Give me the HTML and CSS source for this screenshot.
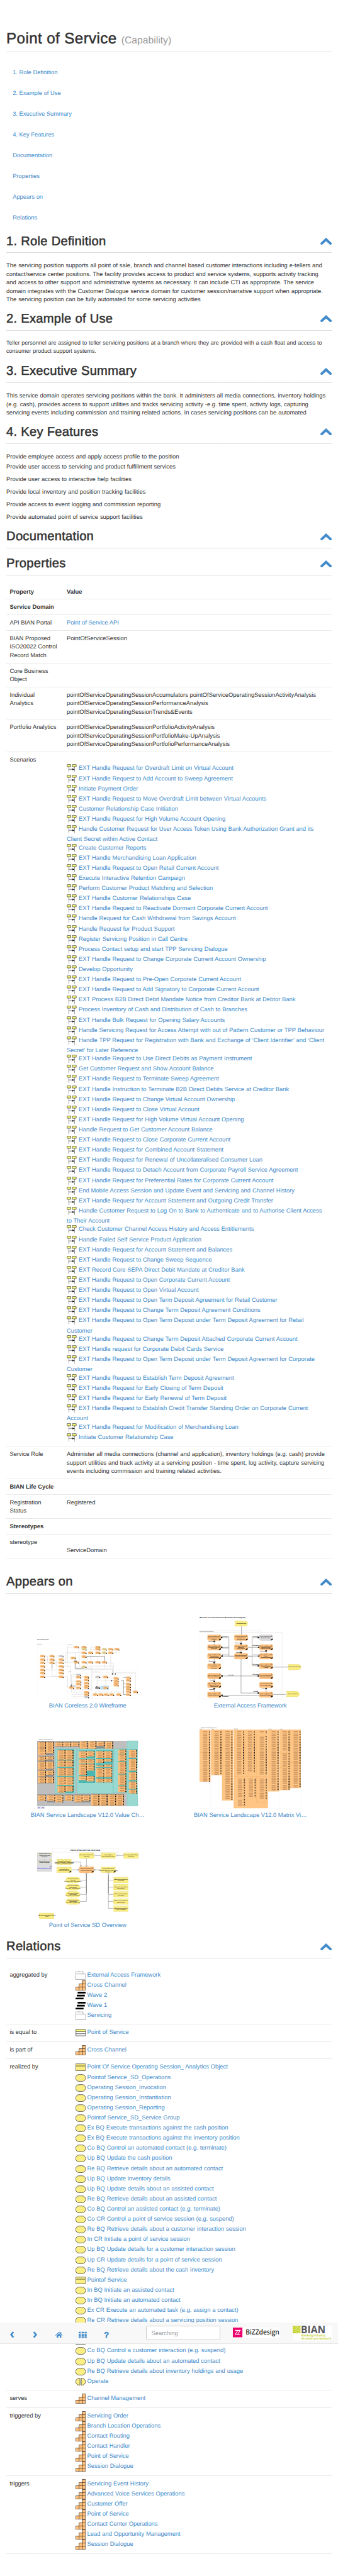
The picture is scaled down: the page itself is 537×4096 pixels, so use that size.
FILE: index.html
```html
<!DOCTYPE html>
<html lang="en">
<head>
<meta charset="utf-8">
<title>Point of Service</title>
<link rel="stylesheet" href="styles.css">
</head>
<body>
<svg class="defs" aria-hidden="true">
  <symbol id="up" viewBox="0 0 27 17"><path d="M3.200 13.600 13.500 4 23.800 13.600" fill="none" stroke="#428bca" stroke-width="6" stroke-linecap="round"/></symbol>
  <symbol id="seq" viewBox="0 0 24 24"><path d="M5 8V20.500M18.500 8V20.500" stroke="#333" stroke-dasharray="3 .8"/><path d="M5 13.700H14" stroke="#333"/><path d="M13.500 11.500 18.300 13.700 13.500 16Z" fill="#000"/><path d="M1 2.500H9.700V7.500H1ZM13.200 2.500H22.500V7.500H13.200Z" fill="#ffff7d" stroke="#222"/></symbol>
  <symbol id="grp" viewBox="0 0 24 24"><path d="M.5 21.500V3H17.800V8.500M.5 8.500H23.500V21.500H.5" fill="none" stroke="#555" stroke-dasharray="2 1"/></symbol>
  <symbol id="cap" viewBox="0 0 24 24"><path d="M.5 23.500V15.700H8.300V8.300H15.700V.8H23.500V23.500ZM8.300 15.700V23.500M15.700 8.300V23.500M8.300 15.700H23.500M15.700 8.300H23.500" fill="#ffc17e" stroke="#1e1308"/></symbol>
  <symbol id="wave" viewBox="0 0 24 24"><path d="M5 3H24V7H5ZM3 10H22V14H3ZM0 17H19V21H0Z"/></symbol>
  <symbol id="tbl" viewBox="0 0 24 24"><path d="M1 4.500H23.500V19.500H1Z" fill="#fff"/><path d="M1 4.500H23.500V9.500H1Z" fill="#ffff7d"/><path d="M1 4.500H23.500V19.500H1ZM1 9.500H23.500M1 14.500H23.500" fill="none" stroke="#111"/></symbol>
  <symbol id="obj" viewBox="0 0 24 24"><path d="M.5 4H23.500V20H.5Z" fill="#fbee83" stroke="#222"/><path d="M1 9H23" stroke="#85804d" stroke-width="2"/></symbol>
  <symbol id="svc" viewBox="0 0 24 24"><rect x=".5" y="4" width="23" height="16" rx="7.500" fill="#fbee83" stroke="#222"/></symbol>
  <symbol id="fn" viewBox="0 0 24 24"><path d="M10.500 4H8.500A8 8 0 0 0 8.500 20H10.500ZM13.500 4H15.500A8 8 0 0 1 15.500 20H13.500Z" fill="#fbee83" stroke="#222"/></symbol>
  <symbol id="n" viewBox="0 0 38 20" overflow="visible"><rect width="35" height="17" rx="4" /><path d="M8 5H27M10 8.500H25M8 12H24" stroke="#6b4c2c" stroke-width="1.200" stroke-dasharray="4 1" opacity=".75"/><rect x="29" y="11" width="7" height="6" rx="2" fill="#000"/></symbol>
  <symbol id="m" viewBox="0 0 64 40" overflow="visible"><rect width="62" height="35" rx="7"/><path d="M56 3 60 9H54Z" fill="#8d6a45"/><path d="M53 33 55 28 61 25 60 31Z" fill="#000" stroke="#000" stroke-width="2"/></symbol>
  <symbol id="ev" viewBox="0 0 64 34" overflow="visible"><path d="M1 1H48Q61 2 61 17Q61 32 48 33H1Q10 17 1 1Z" fill="#fbee83" stroke="#e6d658" stroke-width="2"/></symbol>
  <symbol id="y" viewBox="0 0 68 38" overflow="visible"><path d="M1 1H67V37H1Z" fill="#fbee83" stroke="#eadc66" stroke-width="2.500"/><path d="M3 7H65" stroke="#f5efb0" stroke-width="2"/></symbol>
</svg>
<div class="page">
<h1>Point of Service <small>(Capability)</small></h1>
<ul class="toc">
<li><a>1. Role Definition</a></li><li><a>2. Example of Use</a></li><li><a>3. Executive Summary</a></li><li><a>4. Key Features</a></li><li><a>Documentation</a></li><li><a>Properties</a></li><li><a>Appears on</a></li><li><a>Relations</a></li>
</ul>

<h2>1. Role Definition<svg class="up"><use href="#up"/></svg></h2>
<p>The servicing position supports all point of sale, branch and channel based customer interactions including e-tellers and<br>contact/service center positions. The facility provides access to product and service systems, supports activity tracking<br>and access to other support and administrative systems as necessary. It can include CTI as appropriate. The service<br>domain integrates with the Customer Dialogue service domain for customer session/narrative support when appropriate.<br>The servicing position can be fully automated for some servicing activities</p>

<h2>2. Example of Use<svg class="up"><use href="#up"/></svg></h2>
<p class="small">Teller personnel are assigned to teller servicing positions at a branch where they are provided with a cash float and access to<br>consumer product support systems.</p>

<h2>3. Executive Summary<svg class="up"><use href="#up"/></svg></h2>
<p>This service domain operates servicing positions within the bank. It administers all media connections, inventory holdings<br>(e.g. cash), provides access to support utilities and tracks servicing activity -e.g. time spent, activity logs, capturing<br>servicing events including commission and training related actions. In cases servicing positions can be automated</p>

<h2>4. Key Features<svg class="up"><use href="#up"/></svg></h2>
<div class="features">
<div class="tight">Provide employee access and apply access profile to the position</div>
<div>Provide user access to servicing and product fulfillment services</div>
<div>Provide user access to interactive help facilities</div>
<div>Provide local inventory and position tracking facilities</div>
<div>Provide access to event logging and commission reporting</div>
<div>Provide automated point of service support facilities</div>
</div>

<h2>Documentation<svg class="up"><use href="#up"/></svg></h2>

<h2>Properties<svg class="up"><use href="#up"/></svg></h2>
<div class="table props">
<div class="row head"><div>Property</div><div>Value</div></div>
<div class="row head"><div class="wide">Service Domain</div></div>
<div class="row"><div>API BIAN Portal</div><div><a>Point of Service API</a></div></div>
<div class="row"><div>BIAN Proposed<br>ISO20022 Control<br>Record Match</div><div>PointOfServiceSession</div></div>
<div class="row"><div>Core Business<br>Object</div><div></div></div>
<div class="row"><div>Individual<br>Analytics</div><div>pointOfServiceOperatingSessionAccumulators pointOfServiceOperatingSessionActivityAnalysis<br>pointOfServiceOperatingSessionPerformanceAnalysis<br>pointOfServiceOperatingSessionTrends&amp;Events</div></div>
<div class="row"><div>Portfolio Analytics</div><div>pointOfServiceOperatingSessionPortfolioActivityAnalysis<br>pointOfServiceOperatingSessionPortfolioMake-UpAnalysis<br>pointOfServiceOperatingSessionPortfolioPerformanceAnalysis</div></div>
<div class="row"><div>Scenarios</div><ul class="scenarios">
<li><svg><use href="#seq"/></svg> <a>EXT Handle Request for Overdraft Limit on Virtual Account</a></li>
<li><svg><use href="#seq"/></svg> <a>EXT Handle Request to Add Account to Sweep Agreement</a></li>
<li><svg><use href="#seq"/></svg> <a>Initiate Payment Order</a></li>
<li><svg><use href="#seq"/></svg> <a>EXT Handle Request to Move Overdraft Limit between Virtual Accounts</a></li>
<li><svg><use href="#seq"/></svg> <a>Customer Relationship Case Initiation</a></li>
<li><svg><use href="#seq"/></svg> <a>EXT Handle Request for High Volume Account Opening</a></li>
<li><svg><use href="#seq"/></svg> <a>Handle Customer Request for User Access Token Using Bank Authorization Grant and its<br>Client Secret within Active Contact</a></li>
<li><svg><use href="#seq"/></svg> <a>Create Customer Reports</a></li>
<li><svg><use href="#seq"/></svg> <a>EXT Handle Merchandising Loan Application</a></li>
<li><svg><use href="#seq"/></svg> <a>EXT Handle Request to Open Retail Current Account</a></li>
<li><svg><use href="#seq"/></svg> <a>Execute Interactive Retention Campaign</a></li>
<li><svg><use href="#seq"/></svg> <a>Perform Customer Product Matching and Selection</a></li>
<li><svg><use href="#seq"/></svg> <a>EXT Handle Customer Relationships Case</a></li>
<li><svg><use href="#seq"/></svg> <a>EXT Handle Request to Reactivate Dormant Corporate Current Account</a></li>
<li><svg><use href="#seq"/></svg> <a>Handle Request for Cash Withdrawal from Savings Account</a></li>
<li><svg><use href="#seq"/></svg> <a>Handle Request for Product Support</a></li>
<li><svg><use href="#seq"/></svg> <a>Register Servicing Position in Call Centre</a></li>
<li><svg><use href="#seq"/></svg> <a>Process Contact setup and start TPP Servicing Dialogue</a></li>
<li><svg><use href="#seq"/></svg> <a>EXT Handle Request to Change Corporate Current Account Ownership</a></li>
<li><svg><use href="#seq"/></svg> <a>Develop Opportunity</a></li>
<li><svg><use href="#seq"/></svg> <a>EXT Handle Request to Pre-Open Corporate Current Account</a></li>
<li><svg><use href="#seq"/></svg> <a>EXT Handle Request to Add Signatory to Corporate Current Account</a></li>
<li><svg><use href="#seq"/></svg> <a>EXT Process B2B Direct Debit Mandate Notice from Creditor Bank at Debtor Bank</a></li>
<li><svg><use href="#seq"/></svg> <a>Process Inventory of Cash and Distribution of Cash to Branches</a></li>
<li><svg><use href="#seq"/></svg> <a>EXT Handle Bulk Request for Opening Salary Accounts</a></li>
<li><svg><use href="#seq"/></svg> <a>Handle Servicing Request for Access Attempt with out of Pattern Customer or TPP Behaviour</a></li>
<li><svg><use href="#seq"/></svg> <a>Handle TPP Request for Registration with Bank and Exchange of ‘Client Identifier’ and ‘Client<br>Secret’ for Later Reference</a></li>
<li><svg><use href="#seq"/></svg> <a>EXT Handle Request to Use Direct Debits as Payment Instrument</a></li>
<li><svg><use href="#seq"/></svg> <a>Get Customer Request and Show Account Balance</a></li>
<li><svg><use href="#seq"/></svg> <a>EXT Handle Request to Terminate Sweep Agreement</a></li>
<li><svg><use href="#seq"/></svg> <a>EXT Handle Instruction to Terminate B2B Direct Debits Service at Creditor Bank</a></li>
<li><svg><use href="#seq"/></svg> <a>EXT Handle Request to Change Virtual Account Ownership</a></li>
<li><svg><use href="#seq"/></svg> <a>EXT Handle Request to Close Virtual Account</a></li>
<li><svg><use href="#seq"/></svg> <a>EXT Handle Request for High Volume Virtual Account Opening</a></li>
<li><svg><use href="#seq"/></svg> <a>Handle Request to Get Customer Account Balance</a></li>
<li><svg><use href="#seq"/></svg> <a>EXT Handle Request to Close Corporate Current Account</a></li>
<li><svg><use href="#seq"/></svg> <a>EXT Handle Request for Combined Account Statement</a></li>
<li><svg><use href="#seq"/></svg> <a>EXT Handle Request for Renewal of Uncollateralised Consumer Loan</a></li>
<li><svg><use href="#seq"/></svg> <a>EXT Handle Request to Detach Account from Corporate Payroll Service Agreement</a></li>
<li><svg><use href="#seq"/></svg> <a>EXT Handle Request for Preferential Rates for Corporate Current Account</a></li>
<li><svg><use href="#seq"/></svg> <a>End Mobile Access Session and Update Event and Servicing and Channel History</a></li>
<li><svg><use href="#seq"/></svg> <a>EXT Handle Request for Account Statement and Outgoing Credit Transfer</a></li>
<li><svg><use href="#seq"/></svg> <a>Handle Customer Request to Log On to Bank to Authenticate and to Authorise Client Access<br>to Their Account</a></li>
<li><svg><use href="#seq"/></svg> <a>Check Customer Channel Access History and Access Entitlements</a></li>
<li><svg><use href="#seq"/></svg> <a>Handle Failed Self Service Product Application</a></li>
<li><svg><use href="#seq"/></svg> <a>EXT Handle Request for Account Statement and Balances</a></li>
<li><svg><use href="#seq"/></svg> <a>EXT Handle Request to Change Sweep Sequence</a></li>
<li><svg><use href="#seq"/></svg> <a>EXT Record Core SEPA Direct Debit Mandate at Creditor Bank</a></li>
<li><svg><use href="#seq"/></svg> <a>EXT Handle Request to Open Corporate Current Account</a></li>
<li><svg><use href="#seq"/></svg> <a>EXT Handle Request to Open Virtual Account</a></li>
<li><svg><use href="#seq"/></svg> <a>EXT Handle Request to Open Term Deposit Agreement for Retail Customer</a></li>
<li><svg><use href="#seq"/></svg> <a>EXT Handle Request to Change Term Deposit Agreement Conditions</a></li>
<li><svg><use href="#seq"/></svg> <a>EXT Handle Request to Open Term Deposit under Term Deposit Agreement for Retail<br>Customer</a></li>
<li><svg><use href="#seq"/></svg> <a>EXT Handle Request to Change Term Deposit Attached Corporate Current Account</a></li>
<li><svg><use href="#seq"/></svg> <a>EXT Handle request for Corporate Debit Cards Service</a></li>
<li><svg><use href="#seq"/></svg> <a>EXT Handle Request to Open Term Deposit under Term Deposit Agreement for Corporate<br>Customer</a></li>
<li><svg><use href="#seq"/></svg> <a>EXT Handle Request to Establish Term Deposit Agreement</a></li>
<li><svg><use href="#seq"/></svg> <a>EXT Handle Request for Early Closing of Term Deposit</a></li>
<li><svg><use href="#seq"/></svg> <a>EXT Handle Request for Early Renewal of Term Deposit</a></li>
<li><svg><use href="#seq"/></svg> <a>EXT Handle Request to Establish Credit Transfer Standing Order on Corporate Current<br>Account</a></li>
<li><svg><use href="#seq"/></svg> <a>EXT Handle Request for Modification of Merchandising Loan</a></li>
<li><svg><use href="#seq"/></svg> <a>Initiate Customer Relationship Case</a></li>
</ul></div>
<div class="row"><div>Service Role</div><div class="role">Administer all media connections (channel and application), inventory holdings (e.g. cash) provide<br>support utilities and track activity at a servicing position - time spent, log activity, capture servicing<br>events including commission and training related activities.</div></div>
<div class="row head"><div class="wide">BIAN Life Cycle</div></div>
<div class="row"><div>Registration<br>Status</div><div>Registered</div></div>
<div class="row head"><div class="wide">Stereotypes</div></div>
<div class="row"><div>stereotype</div><div><br>ServiceDomain</div></div>
</div>

<h2>Appears on<svg class="up"><use href="#up"/></svg></h2>
<div class="views">
<figure><div class="shot"><svg viewBox="24 30 720 438" width="240" height="146">
  <g fill="none" stroke="#eee" stroke-width="1.500"><path d="M24 79H236V466H24ZM242 82H743V260H242ZM242 273H408V463H242ZM416 277H743V463H416ZM554 296H620V394H554Z"/></g>
  <text x="24" y="42" font-size="6" font-weight="700" textLength="83">BIAN Coreless Wireframe Diagram</text>
  <path d="M24 76.500H60M243 79.500H275M244 272H267M417 274H473" stroke="#999" stroke-width="2"/>
  <g fill="none" stroke="#c4c4c4" stroke-width="1.800"><path d="M80 160H98V208H112M80 186H98M148 208H176M130 170V304H176M148 186H158V232H176M158 160H176M80 307H176M80 259H176M212 205H284M212 307H240V382H250M238 205V97H284M320 97H339M226 210V137H339M322 112V137M212 232H260V376M404 130V97H437M404 113H437M357 137V245M372 165H455V196M380 165V232H562V288M404 145V196M503 110V250M547 138V250H298V205M372 204H520V210H566V288M292 210V257H558V288M590 120V136H565M298 137V200M323 150V236H339M298 245H412V400H268M268 376V293H300M268 309H300M268 340H300M268 360H300M268 384H356M337 309H356M340 372V331H356M340 352H356M268 395V418H356M268 434H356M268 450H356M450 316V378M456 330V334H554M470 309H493M511 318V378M470 385H493M438 426V415H637M475 415V426M514 415V426M553 415V426M602 415V426M690 415H704M580 288V281H722V408"/></g>
  <g fill="none" stroke="#555" stroke-width="2.500"><path d="M372 163H503V196M298 212V250H355M620 334H638V434H654M638 313H654M638 358H654M638 380H654M268 360V374H300M130 215V250"/></g>
  <rect x="474" y="372" width="60" height="27" fill="#b5dffa"/>
  <g fill="#ffc17e">
  <g id="c7"><use href="#n" x="44" y="177" width="38" height="20"/><use href="#n" x="44" y="200" width="38" height="20"/><use href="#n" x="44" y="251" width="38" height="20"/><use href="#n" x="44" y="273" width="38" height="20"/><use href="#n" x="44" y="299" width="38" height="20"/><use href="#n" x="44" y="225" width="38" height="20"/></g>
  <use href="#c7" x="132"/><use href="#n" x="44" y="153" width="38" height="20"/><use href="#n" x="111" y="153" width="38" height="20"/><use href="#n" x="111" y="177" width="38" height="20"/><use href="#n" x="111" y="200" width="38" height="20"/>
  <use href="#n" x="284" y="88" width="38" height="20"/><use href="#n" x="339" y="88" width="38" height="20"/><use href="#n" x="339" y="129" width="38" height="20"/><use href="#n" x="437" y="88" width="38" height="20"/><use href="#n" x="437" y="104" width="38" height="20"/><use href="#n" x="529" y="104" width="38" height="20"/><use href="#n" x="572" y="104" width="38" height="20"/><use href="#n" x="386" y="129" width="38" height="20"/><use href="#n" x="437" y="129" width="38" height="20"/><use href="#n" x="529" y="129" width="38" height="20"/><use href="#n" x="339" y="156" width="38" height="20"/><use href="#n" x="262" y="166" width="38" height="20"/><use href="#n" x="284" y="196" width="38" height="20"/><use href="#n" x="339" y="196" width="38" height="20"/><use href="#n" x="386" y="196" width="38" height="20"/><use href="#n" x="437" y="196" width="38" height="20"/><use href="#n" x="483" y="196" width="38" height="20"/>
  <use href="#n" x="300" y="302" width="38" height="20"/><use href="#n" x="300" y="333" width="38" height="20"/><use href="#n" x="300" y="352" width="38" height="20"/><use href="#n" x="300" y="377" width="38" height="20"/><use href="#n" x="250" y="376" width="38" height="20"/><use href="#n" x="356" y="302" width="38" height="20"/><use href="#n" x="356" y="323" width="38" height="20"/><use href="#n" x="356" y="345" width="38" height="20"/><use href="#n" x="356" y="363" width="38" height="20"/><use href="#n" x="356" y="376" width="38" height="20"/><use href="#n" x="356" y="410" width="38" height="20"/><use href="#n" x="356" y="427" width="38" height="20"/>
  <use href="#n" x="493" y="300" width="38" height="20"/><use href="#n" x="493" y="378" width="38" height="20"/><use href="#n" x="567" y="311" width="38" height="20"/><use href="#n" x="567" y="328" width="38" height="20"/><use href="#n" x="567" y="345" width="38" height="20"/><use href="#n" x="567" y="359" width="38" height="20"/><use href="#n" x="654" y="306" width="38" height="20"/><use href="#n" x="654" y="325" width="38" height="20"/><use href="#n" x="654" y="351" width="38" height="20"/><use href="#n" x="654" y="371" width="38" height="20"/><use href="#n" x="654" y="387" width="38" height="20"/><use href="#n" x="654" y="405" width="38" height="20"/><use href="#n" x="654" y="426" width="38" height="20"/><use href="#n" x="704" y="407" width="38" height="20"/><use href="#n" x="420" y="426" width="38" height="20"/><use href="#n" x="459" y="426" width="38" height="20"/><use href="#n" x="496" y="426" width="38" height="20"/><use href="#n" x="535" y="426" width="38" height="20"/><use href="#n" x="585" y="426" width="38" height="20"/>
  </g>
  <g fill="#ddd"><use href="#n" x="176" y="153" width="38" height="20"/><use href="#n" x="300" y="286" width="38" height="20"/><use href="#n" x="356" y="443" width="38" height="20"/><use href="#n" x="436" y="300" width="38" height="20"/></g>
  <g fill="#999"><use href="#n" x="436" y="378" width="38" height="20"/></g>
  <g fill="#ecdc9c"><use href="#n" x="339" y="104" width="38" height="20"/><use href="#n" x="483" y="104" width="38" height="20"/><use href="#n" x="483" y="129" width="38" height="20"/><use href="#n" x="339" y="229" width="38" height="20"/></g>
  <path d="M555 285H564V292H555ZM576 285H582V292H576ZM551 332H557V340H551ZM286 194H305V198H286ZM262 372H268V378H262ZM444 376H450V381H444Z"/>
</svg></div><figcaption><a>BIAN Coreless 2.0 Wireframe</a></figcaption></figure>

<figure><div class="shot"><svg viewBox="928 860 469 513" width="240" height="196" preserveAspectRatio="none">
  <path d="M928 960H1310V1373H928ZM928 950H1214V960" fill="none" stroke="#e4e4e4" stroke-width="2"/>
  <text x="929" y="870" font-size="11" font-weight="700" textLength="212" lengthAdjust="spacingAndGlyphs">External Access Framework Wireframe Area Diagram</text>
  <text x="929" y="956" font-size="7" textLength="64" lengthAdjust="spacingAndGlyphs">External Access Framework</text>
  <g fill="none" stroke="#777" stroke-width="2"><path d="M1122 922V975M1120 1010V1035M1120 1070V1090M1027 992H1064V1107H1089M1027 1052H1064M1027 1107H1089M1151 1052H1205M1151 1107H1205M1151 1107H1171V992H1205M1171 1107V1167H1205M996 1010V1035M996 1125V1153M996 1248V1268M996 1303V1328M1236 1070V1090M1236 1303V1328M1120 1125V1336H1205M1027 1230H1205M1027 1350H1205M1267 1175H1337M1267 1345H1329"/></g>
  <path d="M1027 988V996L1034 992ZM1027 1048 1034 1052 1027 1056ZM1205 1048V1056L1198 1052ZM1205 1103V1111L1198 1107ZM1034 1103V1111L1027 1107ZM1034 1226V1234L1027 1230ZM1198 1226V1234L1205 1230ZM1034 1346V1354L1027 1350ZM1198 1332V1340L1205 1336ZM1198 988V996L1205 992ZM1198 1163V1171L1205 1167ZM992 1016H1000L996 1009ZM992 1147H1000L996 1153ZM992 1262H1000L996 1268ZM992 1309H1000L996 1303ZM1232 1075H1240L1236 1069ZM1232 1309H1240L1236 1303ZM1116 1029H1124L1120 1035ZM1116 1084H1124L1120 1090Z" stroke="#000" stroke-width="2"/>
  <g fill="#ffc17e" stroke="#eba75b" stroke-width="1">
  <use href="#m" x="965" y="975" width="64" height="40"/><use href="#m" x="965" y="1035" width="64" height="40"/><use href="#m" x="965" y="1090" width="64" height="40"/><use href="#m" x="965" y="1153" width="64" height="40"/><use href="#m" x="965" y="1213" width="64" height="40"/><use href="#m" x="965" y="1268" width="64" height="40"/><use href="#m" x="965" y="1328" width="64" height="40"/>
  <use href="#m" x="1089" y="975" width="64" height="40"/><use href="#m" x="1089" y="1035" width="64" height="40"/><use href="#m" x="1089" y="1090" width="64" height="40"/>
  <use href="#m" x="1205" y="1035" width="64" height="40"/><use href="#m" x="1205" y="1090" width="64" height="40"/><use href="#m" x="1205" y="1150" width="64" height="40"/><use href="#m" x="1205" y="1213" width="64" height="40"/><use href="#m" x="1205" y="1268" width="64" height="40"/><use href="#m" x="1205" y="1328" width="64" height="40"/></g>
  <g fill="#ddd" stroke="#bbb"><use href="#m" x="1205" y="975" width="64" height="40"/></g>
  <use href="#ev" x="1089" y="888" width="64" height="34"/><use href="#ev" x="1336" y="1158" width="64" height="34"/><use href="#ev" x="1328" y="1325" width="64" height="34"/>
  <g class="tiny"><text x="995" y="988">«ServiceDomain»<tspan x="995" dy="8">Channel Activity</tspan><tspan x="995" dy="8">History</tspan></text><text x="995" y="1048">«ServiceDomain»<tspan x="995" dy="8">Channel Activity</tspan><tspan x="995" dy="8">Analysis</tspan></text><text x="995" y="1103">«ServiceDomain»<tspan x="995" dy="8">Transaction</tspan><tspan x="995" dy="8">Authorization</tspan></text><text x="995" y="1166">«ServiceDomain»<tspan x="995" dy="8">Customer</tspan><tspan x="995" dy="8">Access</tspan></text><text x="995" y="1229">«ServiceDomain»<tspan x="995" dy="8">Contact Routing</tspan></text><text x="995" y="1281">«ServiceDomain»<tspan x="995" dy="8">Contact Center</tspan><tspan x="995" dy="8">Operations</tspan></text><text x="995" y="1343">«ServiceDomain»<tspan x="995" dy="8">Point of Service</tspan></text>
  <text x="1119" y="988">«ServiceDomain»<tspan x="1119" dy="8">Customer</tspan><tspan x="1119" dy="8">Workbench</tspan></text><text x="1119" y="1048">«ServiceDomain»<tspan x="1119" dy="8">eBranch</tspan><tspan x="1119" dy="8">Operations</tspan></text><text x="1119" y="1105">«ServiceDomain»<tspan x="1119" dy="8">Contact Handler</tspan></text>
  <text x="1235" y="990">Party Reference<tspan x="1235" dy="8">Data Directory</tspan></text><text x="1235" y="1048">«ServiceDomain»<tspan x="1235" dy="8">Issued Device</tspan><tspan x="1235" dy="8">Administration</tspan></text><text x="1235" y="1103">«ServiceDomain»<tspan x="1235" dy="8">Party</tspan><tspan x="1235" dy="8">Authentication</tspan></text><text x="1235" y="1163">«ServiceDomain»<tspan x="1235" dy="8">Party Routing</tspan><tspan x="1235" dy="8">Profile</tspan></text><text x="1235" y="1229">«ServiceDomain»<tspan x="1235" dy="8">Session History</tspan></text><text x="1235" y="1283">«ServiceDomain»<tspan x="1235" dy="8">Servicing Order</tspan></text><text x="1235" y="1343">«ServiceDomain»<tspan x="1235" dy="8">Session Dialogue</tspan></text>
  <text x="1121" y="907">Access Event</text><text x="1366" y="1176">Information Event</text><text x="1359" y="1343">Service Event</text><text x="1046" y="988">Executes</text><text x="1046" y="1060">Retrieves</text><text x="1047" y="1103">Executes</text><text x="986" y="1021">Retrieves</text><text x="986" y="1141">Retrieves</text><text x="1109" y="1027">Executes</text><text x="1108" y="1085">Initiate</text><text x="1189" y="988">Retrieves</text><text x="1189" y="1045">Retrieves</text><text x="1192" y="1103">Executes</text><text x="1224" y="1082">Retrieves</text><text x="1189" y="1160">Retrieves</text><text x="1073" y="1226">Provide</text><text x="1189" y="1223">Retrieves</text><text x="985" y="1259">Notify</text><text x="984" y="1317">Update</text><text x="1188" y="1327">Initiate</text><text x="1226" y="1314">Initiate</text><text x="1047" y="1359">Respond</text></g>
</svg></div><figcaption><a>External Access Framework</a></figcaption></figure>

<figure><div class="shot"><svg viewBox="172 65 471 467" width="240" height="164" preserveAspectRatio="none">
  <text x="180" y="69" font-size="6" font-weight="700" textLength="64" lengthAdjust="spacingAndGlyphs">BIAN Service Landscape V12.0</text>
  <path d="M172 73H589V515H172Z" fill="#bebebe"/><path d="M174 77H250V172H174ZM174 176H250V210H174ZM174 211H250V270H174ZM174 272H250V315H174ZM174 317H250V361H174ZM255 80H368V116H255ZM369 77H526V127H369ZM174 435H214V481H174ZM218 435H295V489H218ZM300 435H340V481H300ZM344 435H419V489H344ZM423 433H575V512H423Z" fill="#8f8f8f"/>
  <path d="M254 128H354L350 428H254L260 280ZM357 128H527L523 250 527 428H357ZM529 128H589V425H524ZM590 74H640L636 290 640 513H590Z" fill="#99d9d1" stroke="#74c6be" stroke-width="2"/>
  <path d="M266 131H343V426H266ZM365 138H441V190H365ZM365 194H441V228H365ZM365 231H441V358H365ZM446 138H523V228H446ZM446 231H521V356H446ZM549 131H587V422H549ZM598 131H637V429H598Z" fill="#4bb7b3"/>
  <path id="vc" d="M194 82V121M194 124V171M232 82V157M194 180V207M232 180V200M194 215V268M232 215V262M194 275V313M232 275V303M194 320V359M232 320V359M274 84V112M311 84V112M349 84V112M388 78V126M428 78V126M467 80V108M506 80V126M285 137V201M322 137V201M285 206V250M322 206V250M285 256V310M322 256V310M285 317V371M322 317V371M285 379V424M322 379V415M384 143V188M420 143V180M384 199V227M420 199V227M384 232V305M420 232V275M384 312V339M420 312V347M464 143V188M502 143V188M464 196V222M502 196V214M464 240V252M502 234V252M464 258V320M502 258V320M464 328V355M502 328V355M567 133V161M567 165V209M567 215V296M567 302V374M567 380V421M617 135V187M617 196V275M617 286V339M617 348V397M617 403V429M194 440V478M237 440V478M274 440V488M320 440V478M364 440V486M400 440V478M442 436V510M480 436V510M520 436V510M556 436V510"/>
  <use href="#vc" class="rows"/><use href="#vc" class="dots" x="16.500"/>
  <path d="M172 517H208V531H172Z" fill="#dcdcf5"/><path d="M177 520H185V529H177ZM195 520H204V528H195Z" fill="#9a9ab5"/>
</svg></div><figcaption><a>BIAN Service Landscape V12.0 Value Ch…</a></figcaption></figure>

<figure><div class="shot"><svg viewBox="927 -22 470 552" width="240" height="193" preserveAspectRatio="none">
  <text x="934" y="-16" font-size="6" font-weight="700" textLength="72" lengthAdjust="spacingAndGlyphs">BIAN Service Landscape Matrix V12.0</text>
  <path d="M927 -8H979V525H927ZM980 -8H1083V525H980ZM1245 -8H1296V525H1245ZM1297 -8H1396V525H1297Z" fill="none" stroke="#eee"/>
  <path d="M928 -12H940M982 -12H994M1086 -13H1106M1246 -12H1262M1298 -12H1312" stroke="#888" stroke-width="2"/>
  <path d="M927 -8H978V344H927ZM980 -8H1031V301H980ZM1031 -8H1082V472H1031ZM1085 -8H1244V525H1085ZM1245 -8H1295V410H1245ZM1297 -8H1347V402H1297ZM1347 -8H1397V388H1347Z" fill="#ffc584"/>
  <path d="M1031 -8V301M1347 -8V388M927 146H978M927 264H978M980 175H1031M1031 237H1082M1031 369H1082M1085 310H1244M1137 20V295M1190 20V295M1245 210H1295M1297 150H1347M1297 248H1347M1347 215H1397M1192 310V484H1240V310" fill="none" stroke="#efb06b" stroke-width="2"/>
  <path id="mx" d="M953 0V345M1006 0V296M1057 0V467M1111 0V295M1161 0V282M1216 0V18M1216 36V295M1271 0V405M1322 0V138M1322 150V246M1322 252V398M1373 0V385M1115 325V450M1115 462V510M1165 325V448M1216 325V462"/>
  <use href="#mx" class="rows"/><use href="#mx" class="dots" x="20"/>
</svg></div><figcaption><a>BIAN Service Landscape V12.0 Matrix Vi…</a></figcaption></figure>

<figure><div class="shot"><svg viewBox="172 795 471 477" width="240" height="167" preserveAspectRatio="none">
  <path d="M242 796H550V822H242Z" fill="none" stroke="#ddd"/>
  <text x="327" y="810" font-size="13" font-weight="700" textLength="138" lengthAdjust="spacingAndGlyphs">Point of Service SD Overview</text>
  <path d="M172 825H240V863H172ZM172 868H240V906H172ZM172 911H240V950H172Z" fill="#ddd" stroke="#c9c9c9" stroke-width="2"/>
  <path d="M231 828H238V836H231ZM231 871H238V879H231Z" fill="#d8d44a"/><path d="M232 913H239V919H232Z" fill="#888"/>
  <g fill="none" stroke="#888" stroke-width="2"><path d="M435 843H468M540 843H574M401 862V918M331 888H375V918M331 940H367M437 940H468M371 1010H401M371 1058H401M371 1107H401M371 1154H401V960M503 960V1201H527M503 1010H527M503 1058H527M503 1107H527M503 1154H527"/></g>
  <path d="M503 975V1100M401 960V1100" stroke="#444" stroke-width="2"/>
  <path d="M371 910H379L375 919ZM397 910H405L401 919ZM397 967H405L401 958ZM500 967H507L503 958ZM362 936V946L367 941ZM441 936V946L436 941ZM538 843 542 838 546 843 542 848Z" fill="#fff" stroke="#666" stroke-width="1.500"/>
  <use href="#y" x="468" y="825" width="68" height="38"/><use href="#y" x="574" y="825" width="68" height="38"/><use href="#y" x="263" y="868" width="68" height="38"/><use href="#y" x="263" y="920" width="68" height="40"/><use href="#y" x="468" y="920" width="68" height="40"/><use href="#y" x="527" y="990" width="68" height="38"/><use href="#y" x="527" y="1039" width="68" height="38"/><use href="#y" x="527" y="1087" width="68" height="38"/><use href="#y" x="527" y="1136" width="68" height="38"/><use href="#y" x="527" y="1184" width="68" height="38"/><use href="#y" x="182" y="1233" width="68" height="38"/>
  <g fill="#fbee83" stroke="#eadc66" stroke-width="2"><rect x="368" y="825" width="67" height="38" rx="7"/><rect x="305" y="990" width="66" height="38" rx="17"/><rect x="305" y="1039" width="66" height="38" rx="17"/><rect x="305" y="1087" width="66" height="38" rx="17"/><rect x="305" y="1136" width="66" height="38" rx="17"/></g>
  <rect x="368" y="920" width="67" height="40" rx="6" fill="#ffc17e" stroke="#eba75b" stroke-width="2"/>
  <path d="M426 957 428 951 434 948 432 955ZM322 957 324 951 330 948 328 955ZM528 957 530 951 536 948 534 955Z" stroke="#000" stroke-width="2"/>
  <path d="M427 923 433 931H427ZM429 828H432V832H429Z" fill="#777"/>
  <g class="tiny"><text x="206" y="835">Point of Service<tspan x="206" dy="10">Control Record</tspan><tspan x="206" dy="10">Diagram</tspan></text><text x="206" y="883">Point of Service<tspan x="206" dy="10">BOM Diagram</tspan></text><text x="206" y="932" class="lnk">Point of Service API</text>
  <text x="401" y="841">«FunctionalPattern»<tspan x="401" dy="9">Operate</tspan></text><text x="502" y="843">«AssetType»<tspan x="502" dy="9">Operating Session</tspan></text><text x="608" y="843">«GenericArtifactType»<tspan x="608" dy="9">Function</tspan></text>
  <text x="297" y="883">«AnalyticsObject»<tspan x="297" dy="9">Point Of Service Operating</tspan><tspan x="297" dy="8">Session_ Analytics Object</tspan></text><text x="297" y="940">«AssetType»<tspan x="297" dy="9">Point of Service</tspan></text><text x="401" y="937">«ServiceDomain»<tspan x="401" dy="10">Point of Service</tspan></text><text x="502" y="935">«ControlRecord»<tspan x="502" dy="12">Point of Service Operating</tspan><tspan x="502" dy="8">Session</tspan></text>
  <text x="338" y="1003">«ServiceGroup»<tspan x="338" dy="9">Pointof</tspan><tspan x="338" dy="8">Service_SD_Operations</tspan></text><text x="338" y="1052">«ServiceGroup»<tspan x="338" dy="9">Operating</tspan><tspan x="338" dy="8">Session_Instantiation</tspan></text><text x="338" y="1100">«ServiceGroup»<tspan x="338" dy="9">Operating</tspan><tspan x="338" dy="8">Session_Invocation</tspan></text><text x="338" y="1149">«ServiceGroup»<tspan x="338" dy="9">Operating</tspan><tspan x="338" dy="8">Session_Reporting</tspan></text>
  <text x="561" y="1008">«BehaviorQualifier»<tspan x="561" dy="10">Assisted</tspan></text><text x="561" y="1057">«BehaviorQualifier»<tspan x="561" dy="10">Interaction</tspan></text><text x="561" y="1105">«BehaviorQualifier»<tspan x="561" dy="10">Inventory</tspan></text><text x="561" y="1154">«BehaviorQualifier»<tspan x="561" dy="10">Automated</tspan></text><text x="561" y="1202">«BehaviorQualifier»<tspan x="561" dy="10">Cash Position</tspan></text><text x="217" y="1251">«BehaviorQualifierType»<tspan x="217" dy="8">Task</tspan></text></g>
</svg></div><figcaption><a>Point of Service SD Overview</a></figcaption></figure>
</div>

<h2>Relations<svg class="up"><use href="#up"/></svg></h2>
<div class="table rels">
<div class="row"><div>aggregated by</div><ul>
<li><svg><use href="#grp"/></svg><a>External Access Framework</a></li>
<li><svg><use href="#cap"/></svg><a>Cross Channel</a></li>
<li><svg><use href="#wave"/></svg><a>Wave 2</a></li>
<li><svg><use href="#wave"/></svg><a>Wave 1</a></li>
<li><svg><use href="#grp"/></svg><a>Servicing</a></li>
</ul></div>
<div class="row"><div>is equal to</div><ul><li><svg><use href="#tbl"/></svg><a>Point of Service</a></li></ul></div>
<div class="row"><div>is part of</div><ul><li><svg><use href="#cap"/></svg><a>Cross Channel</a></li></ul></div>
<div class="row"><div>realized by</div><ul>
<li><svg><use href="#obj"/></svg><a>Point Of Service Operating Session_ Analytics Object</a></li>
<li><svg><use href="#svc"/></svg><a>Pointof Service_SD_Operations</a></li>
<li><svg><use href="#svc"/></svg><a>Operating Session_Invocation</a></li>
<li><svg><use href="#svc"/></svg><a>Operating Session_Instantiation</a></li>
<li><svg><use href="#svc"/></svg><a>Operating Session_Reporting</a></li>
<li><svg><use href="#svc"/></svg><a>Pointof Service_SD_Service Group</a></li>
<li><svg><use href="#svc"/></svg><a>Ex BQ Execute transactions against the cash position</a></li>
<li><svg><use href="#svc"/></svg><a>Ex BQ Execute transactions against the inventory position</a></li>
<li><svg><use href="#svc"/></svg><a>Co BQ Control an automated contact (e.g. terminate)</a></li>
<li><svg><use href="#svc"/></svg><a>Up BQ Update the cash position</a></li>
<li><svg><use href="#svc"/></svg><a>Re BQ Retrieve details about an automated contact</a></li>
<li><svg><use href="#svc"/></svg><a>Up BQ Update inventory details</a></li>
<li><svg><use href="#svc"/></svg><a>Up BQ Update details about an assisted contact</a></li>
<li><svg><use href="#svc"/></svg><a>Re BQ Retrieve details about an assisted contact</a></li>
<li><svg><use href="#svc"/></svg><a>Co BQ Control an assisted contact (e.g. terminate)</a></li>
<li><svg><use href="#svc"/></svg><a>Co CR Control a point of service session (e.g. suspend)</a></li>
<li><svg><use href="#svc"/></svg><a>Re BQ Retrieve details about a customer interaction session</a></li>
<li><svg><use href="#svc"/></svg><a>In CR Initiate a point of service session</a></li>
<li><svg><use href="#svc"/></svg><a>Up BQ Update details for a customer interaction session</a></li>
<li><svg><use href="#svc"/></svg><a>Up CR Update details for a point of service session</a></li>
<li><svg><use href="#svc"/></svg><a>Re BQ Retrieve details about the cash inventory</a></li>
<li><svg><use href="#obj"/></svg><a>Pointof Service</a></li>
<li><svg><use href="#svc"/></svg><a>In BQ Initiate an assisted contact</a></li>
<li><svg><use href="#svc"/></svg><a>In BQ Initiate an automated contact</a></li>
<li><svg><use href="#svc"/></svg><a>Ex CR Execute an automated task (e.g. assign a contact)</a></li>
<li><svg><use href="#svc"/></svg><a>Re CR Retrieve details about a servicing position session</a></li>
<li><svg><use href="#svc"/></svg></li>
<li><svg><use href="#obj"/></svg><a>Point of Service Operating Session</a></li>
<li><svg><use href="#svc"/></svg><a>Co BQ Control a customer interaction (e.g. suspend)</a></li>
<li><svg><use href="#svc"/></svg><a>Up BQ Update details about an automated contact</a></li>
<li><svg><use href="#svc"/></svg><a>Re BQ Retrieve details about inventory holdings and usage</a></li>
<li><svg><use href="#fn"/></svg><a>Operate</a></li>
</ul></div>
<div class="row"><div>serves</div><ul><li><svg><use href="#cap"/></svg><a>Channel Management</a></li></ul></div>
<div class="row"><div>triggered by</div><ul>
<li><svg><use href="#cap"/></svg><a>Servicing Order</a></li>
<li><svg><use href="#cap"/></svg><a>Branch Location Operations</a></li>
<li><svg><use href="#cap"/></svg><a>Contact Routing</a></li>
<li><svg><use href="#cap"/></svg><a>Contact Handler</a></li>
<li><svg><use href="#cap"/></svg><a>Point of Service</a></li>
<li><svg><use href="#cap"/></svg><a>Session Dialogue</a></li>
</ul></div>
<div class="row"><div>triggers</div><ul>
<li><svg><use href="#cap"/></svg><a>Servicing Event History</a></li>
<li><svg><use href="#cap"/></svg><a>Advanced Voice Services Operations</a></li>
<li><svg><use href="#cap"/></svg><a>Customer Offer</a></li>
<li><svg><use href="#cap"/></svg><a>Point of Service</a></li>
<li><svg><use href="#cap"/></svg><a>Contact Center Operations</a></li>
<li><svg><use href="#cap"/></svg><a>Lead and Opportunity Management</a></li>
<li><svg><use href="#cap"/></svg><a>Session Dialogue</a></li>
</ul></div>
</div>

<nav class="bar">
  <a class="btn"><svg width="12" height="16" viewBox="0 0 12 16"><path d="M9.500 1.500 4 8 9.500 14.500" fill="none" stroke="#428bca" stroke-width="4"/></svg></a>
  <a class="btn"><svg width="12" height="16" viewBox="0 0 12 16"><path d="M2.500 1.500 8 8 2.500 14.500" fill="none" stroke="#428bca" stroke-width="4"/></svg></a>
  <a class="btn"><svg width="17" height="16" viewBox="0 0 17 16"><path d="M8.500 1 12 4.500V2H14V6.500L17 9.500 16 10.500 8.500 3.500 1 10.500 0 9.500ZM8.500 5 14 10V15H10.300V10.500H6.700V15H3V10Z" fill="#428bca"/></svg></a>
  <a class="btn"><svg width="19" height="16" viewBox="0 0 19 16"><path d="M0 1H5V5H0ZM7 1H12V5H7ZM14 1H19V5H14ZM0 6.300H5V10.300H0ZM7 6.300H12V10.300H7ZM14 6.300H19V10.300H14ZM0 11.700H5V15.700H0ZM7 11.700H12V15.700H7ZM14 11.700H19V15.700H14Z" fill="#428bca"/></svg></a>
  <a class="btn help">?</a>
  <div class="search">Searching</div>
  <svg class="bizz" width="111" height="24" viewBox="0 0 111 24"><path d="M0 0H111V24H0Z" fill="#fff"/><path d="M0 0H22.500V23H0Z" fill="#ec006c"/><path d="M5 6.500H12L5.500 16.500H12M10.500 6.500H17.500L11 16.500H17.500" fill="none" stroke="#fff" stroke-width="1.600"/><text x="30" y="17" textLength="80" lengthAdjust="spacingAndGlyphs">BiZZdesign</text></svg>
  <svg class="bian" width="93" height="35" viewBox="0 0 93 35"><path d="M0 0H93V35H0Z" fill="#fff"/><path d="M0 0H18.500V18H0Z" fill="#c3d22b"/><path d="M0 4Q11 5 18.500 17M0 8Q10 9 15 18M0 12Q7 13 11 18M4 0Q14 4 18.500 12M9 0Q15 3 18.500 7" fill="none" stroke="#f5f8d8" stroke-width=".9"/><text class="big" x="19.500" y="18" textLength="58" lengthAdjust="spacingAndGlyphs">BIAN</text><text x="20.500" y="26" textLength="57" lengthAdjust="spacingAndGlyphs">Banking Industry</text><text x="20.500" y="33.500" textLength="71" lengthAdjust="spacingAndGlyphs">Architecture Network</text></svg>
</nav>
</div>
</body>
</html>
```
FILE: styles.css
```css
html { background: #fff; }
body { margin: 0; }
.defs {
  position: absolute;
  width: 0;
  height: 0;
}
/* Layout units are those of an 800px wide page. Rules are painted as
   backgrounds so that their thickness stays fractional in the layout. */
.page {
  position: relative;
  box-sizing: border-box;
  width: 800px;
  height: 6101px;
  padding: 72px 15px 0;
  zoom: .67125;
  font: 14px/20px "Liberation Sans", Arial, sans-serif;
  color: #333;
  text-rendering: geometricPrecision;
}
a { color: #428bca; }
ul { margin: 0; padding: 0; list-style: none; }
h1, h2 {
  box-sizing: border-box;
  margin: 0;
  font-weight: 400;
  -webkit-text-stroke: .8px currentColor;
  background: linear-gradient(#ccc, #ccc) bottom / 100% 1px no-repeat;
}
h1 {
  height: 51px;
  font-size: 36px;
  line-height: 41px;
  letter-spacing: .6px;
}
h1 small {
  font-size: 23.4px;
  color: #999;
  letter-spacing: 0;
  -webkit-text-stroke: 0;
}
h2 {
  display: flex;
  justify-content: space-between;
  height: 44px;
  margin-bottom: 20px;
  font-size: 30px;
  line-height: 34px;
  letter-spacing: .42px;
}
.up {
  width: 27px;
  height: 17px;
  margin-top: 8px;
}
.toc { padding: 25px 15px 15px; }
.toc li { height: 49px; line-height: 49px; }
p, .features, .role {
  letter-spacing: .02px;
  word-spacing: .42px;
  white-space: nowrap;
}
p { margin: 0 0 20px; }
.small { font-size: 13.33px; }
.features { padding-bottom: 10px; }
.features div { margin-bottom: 10px; }
.features .tight { margin-bottom: 4px; }

.table {
  margin-bottom: 40px;
  background: linear-gradient(#ddd, #ddd) bottom / 100% 1px no-repeat;
  padding-bottom: 1px;
}
.row {
  display: grid;
  grid-template-columns: 135px 1fr;
  padding-top: 1px;
  background: linear-gradient(#ddd, #ddd) top / 100% 1px no-repeat;
}
.row:first-child { padding-top: 0; background: none; }
.row > * { padding: 8px; }
.head { font-weight: 700; }
.wide { grid-column: 1 / -1; }
.row .scenarios { padding-top: 28px; }
.scenarios {
  letter-spacing: .02px;
  word-spacing: .3px;
  white-space: nowrap;
}
li svg {
  width: 24px;
  height: 24px;
  vertical-align: top;
}
.rels .row { grid-template-columns: 156px 1fr; }
.rels li {
  height: 24px;
  word-spacing: .3px;
}
.rels li a { margin-left: 3.500px; }

.views {
  display: grid;
  grid-template-columns: 1fr 1fr;
  grid-auto-rows: 260px;
  margin-bottom: 20px;
}
figure { margin: 0; text-align: center; }
.shot {
  display: flex;
  align-items: flex-end;
  justify-content: center;
  height: 230px;
  margin-bottom: 5px;
}
/* Column blocks of the landscape maps: fill, lines of text, markers */
#vc { stroke: var(--s, #ffbf7b); stroke-width: var(--w, 37px); stroke-dasharray: var(--d, none); }
#mx { stroke: var(--s, none); stroke-width: var(--w, 0); stroke-dasharray: var(--d, none); }
.rows { --s: #a87747; --w: 20px; --d: 2 4; }
.dots { --s: #17110a; --w: 5px; --d: 5 6; }
.tiny {
  font-size: 7.500px;
  font-weight: 700;
  text-anchor: middle;
  fill: #332a20;
  letter-spacing: -.3px;
}
.tiny .lnk { fill: #22f; text-decoration: underline; }

/* Navigation bar lying over the list */
.bar {
  position: absolute;
  top: 5501px;
  left: 0;
  box-sizing: border-box;
  display: flex;
  align-items: flex-start;
  width: 800px;
  height: 51px;
  background: #f8f8f8;
  border-bottom: 1px solid #e7e7e7;
}
.btn {
  display: flex;
  align-items: center;
  justify-content: center;
  width: 56px;
  height: 59px;
}
.help { font-size: 19px; font-weight: 700; -webkit-text-stroke: .8px #428bca; }
.search {
  box-sizing: border-box;
  width: 176px;
  height: 34px;
  margin: 8px 31px 0 65px;
  padding: 6px 12px;
  border: 1px solid #ccc;
  border-radius: 4px;
  background: #fff;
  color: #999;
}
.bizz, .bian { overflow: visible; }
.bizz { margin: 13px 30px 0 0; font: 600 17px "Open Sans", sans-serif; fill: #2b2724; }
.bian { margin-top: 8px; font: 600 7px "Open Sans", sans-serif; fill: #b5c600; }
.bian .big { font: 700 25px "Open Sans", sans-serif; fill: #58595b; }
```
